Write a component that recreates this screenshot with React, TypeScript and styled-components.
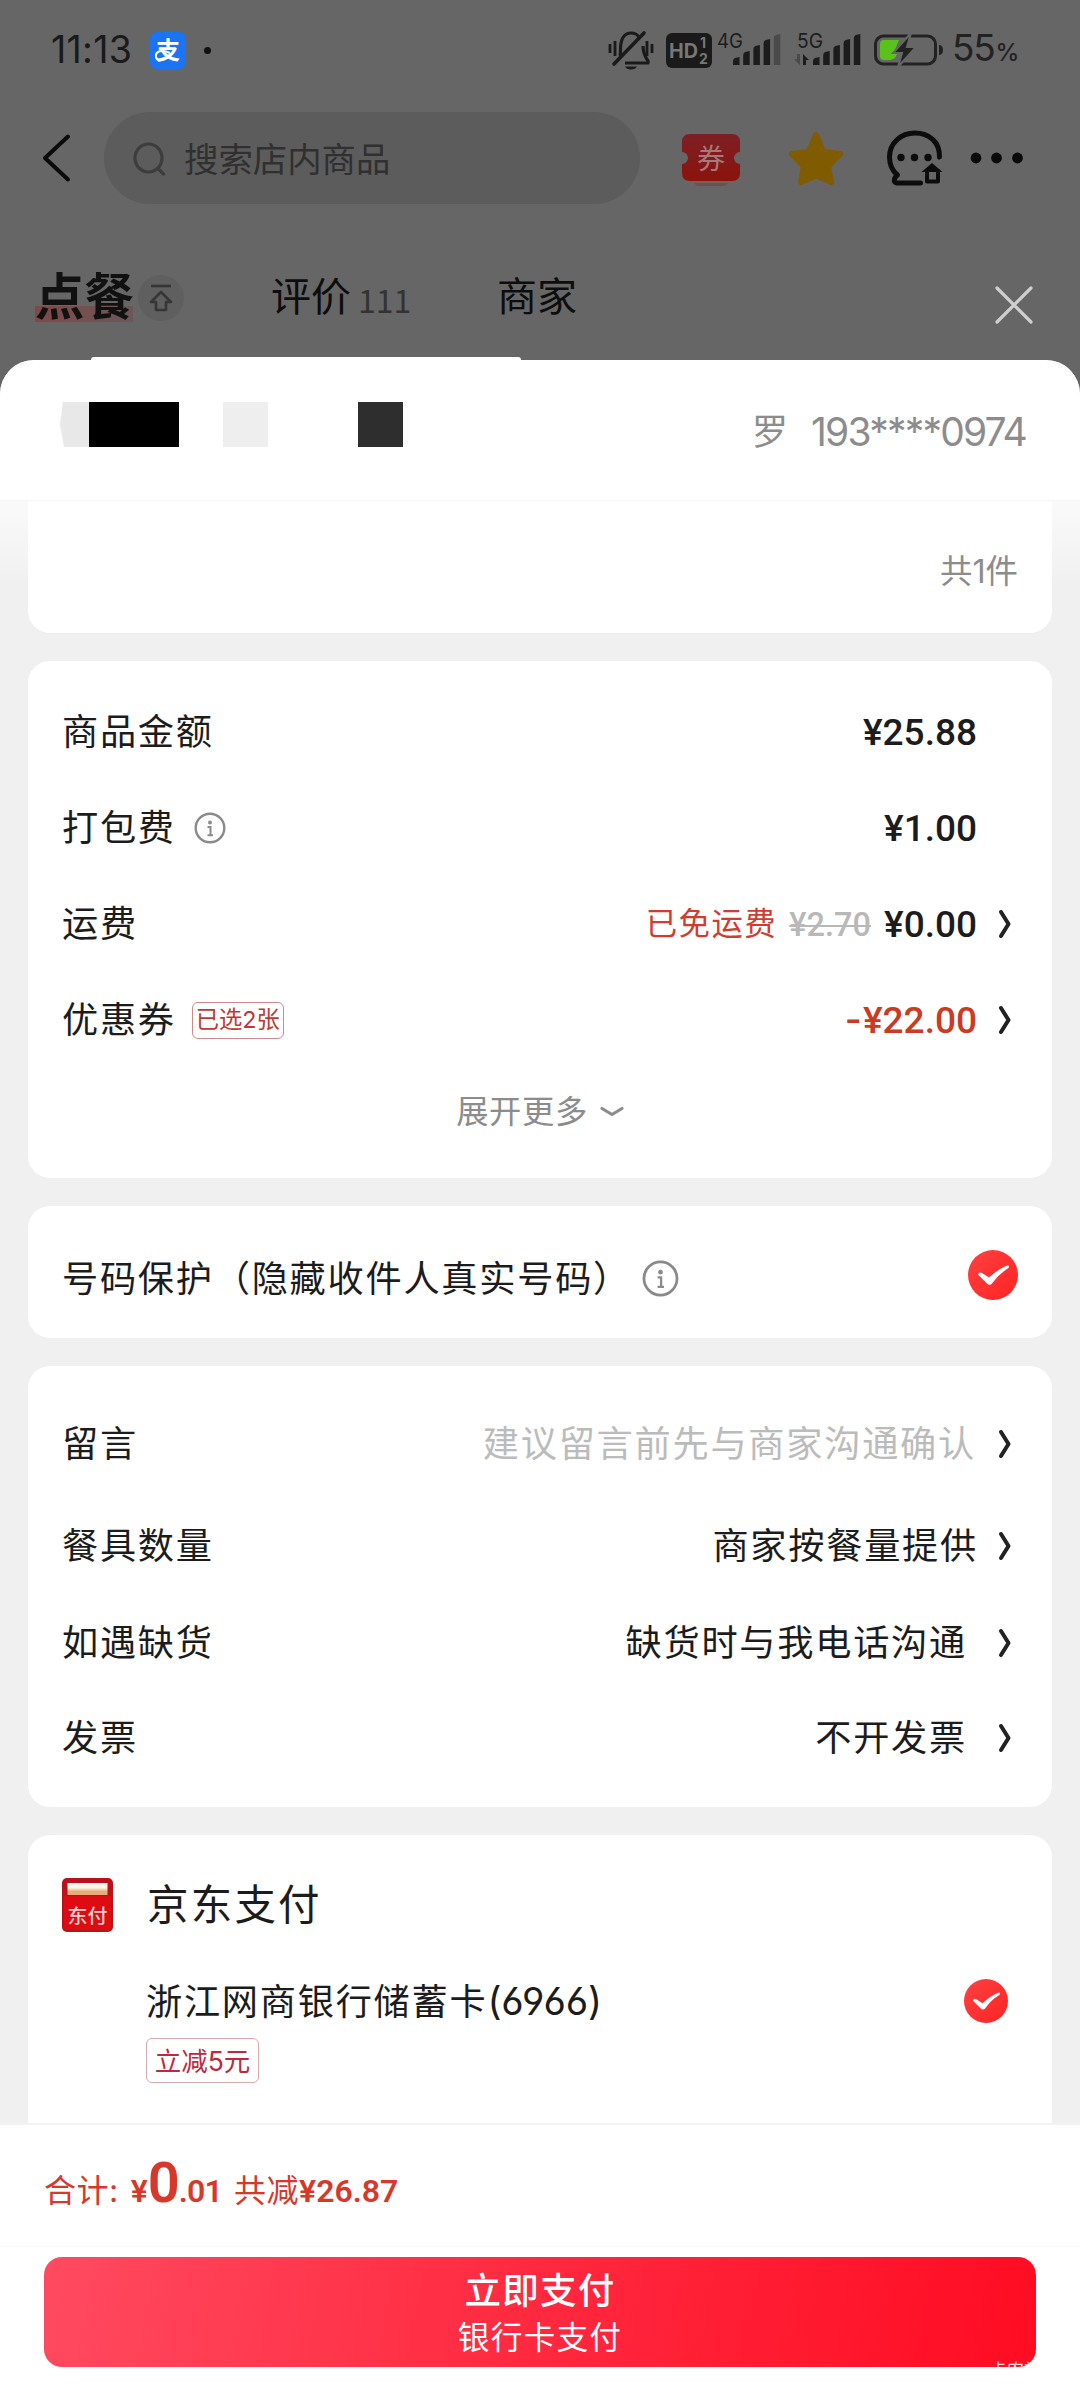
import React from "react";
import styled, { createGlobalStyle } from "styled-components";

const sans = `Inter, "Noto Sans CJK SC", sans-serif`;
const cjk = `"Noto Sans CJK SC", sans-serif`;
const price = `Roboto, "Noto Sans CJK SC", sans-serif`;

const GlobalStyle = createGlobalStyle`
  * { box-sizing: border-box; }
  body { margin: 0; background: #666; font-family: ${sans}; }
  svg { display: block; flex: none; overflow: visible; }
`;

const Page = styled.div`
  width: 1080px;
  height: 2400px;
  display: flex;
  flex-direction: column;
  overflow: hidden;
  background: #666;
  color: #1c1c1c;
`;

/* dimmed shop page behind the sheet */

const StatusBar = styled.div`
  height: 100px;
  padding: 0 65px 0 51px;
  display: flex;
  align-items: center;
  justify-content: space-between;
`;

const StatusGroup = styled.div`
  display: flex;
  align-items: center;
`;

const Clock = styled.span`
  width: 99px;
  font-size: 37.5px;
  line-height: 40px;
  letter-spacing: 0.3px;
  color: #1a1a1a;
`;

const NoticeDot = styled.i`
  width: 7px;
  height: 7px;
  margin-left: 18px;
  border-radius: 50%;
  background: #111;
`;

const Gap = styled.span<{ $w: number }>`
  width: ${(p) => p.$w}px;
`;

const Level = styled.span`
  width: 63px;
  display: flex;
  align-items: baseline;
  font-size: 37px;
  line-height: 40px;
  letter-spacing: -1.2px;
  color: #222;
`;

const Percent = styled.small`
  margin-left: 1px;
  font-size: 24px;
  font-weight: 500;
  letter-spacing: 0;
`;

const NavBar = styled.div`
  height: 116px;
  padding: 0 54px 0 40px;
  display: flex;
  align-items: center;
`;

const SearchBox = styled.div`
  width: 536px;
  height: 92px;
  margin-left: 32px;
  padding: 3px 0 0 28px;
  display: flex;
  align-items: center;
  gap: 18px;
  border-radius: 46px;
  background: #5c5c5c;
  color: #303030;
  font-size: 34.4px;
  line-height: 40px;
`;

const NavIcons = styled.div`
  margin-left: 42px;
  display: flex;
  align-items: center;
`;

const Tabs = styled.div`
  height: 141px;
  padding: 20px 46px 0 35px;
  display: flex;
  align-items: center;
`;

const ActiveTab = styled.span`
  width: 98px;
  font-size: 49.5px;
  line-height: 50px;
  font-weight: 700;
  color: #111;
  white-space: nowrap;
  background: linear-gradient(90deg, #824848, #6a5858) 0 34px / 98px 17px no-repeat;
`;

const TopBadge = styled.span`
  width: 46px;
  height: 46px;
  margin: 2px 87px 0 5px;
  display: flex;
  align-items: center;
  justify-content: center;
  border-radius: 50%;
  background: #5f5f5f;
`;

const Tab = styled.span`
  font-size: 40px;
  line-height: 44px;
  color: #0d0d0d;
`;

const TabCount = styled.span`
  width: 139px;
  margin-left: 7px;
  padding-top: 4px;
  font-family: ${cjk};
  font-size: 32px;
  line-height: 34px;
  color: #333;
`;

const CloseButton = styled.button`
  margin: 16px 0 0 auto;
  padding: 0;
  border: 0;
  background: none;
`;

const SheetLip = styled.div`
  width: 430px;
  height: 3px;
  margin-left: 91px;
  border-radius: 5px 5px 0 0;
  background: #fff;
  flex: none;
`;

/* checkout sheet */

const Sheet = styled.main`
  height: 2040px;
  display: flex;
  flex-direction: column;
  overflow: hidden;
  border-radius: 34px 34px 0 0;
  background: #f0f0f0;
`;

const Address = styled.header`
  height: 141px;
  padding: 42px 54px 0 60px;
  display: flex;
  justify-content: space-between;
  align-items: flex-start;
  background: #fff;
  border-bottom: 1px solid #f6f6f6;
`;

const Mosaic = styled.div`
  display: flex;
  height: 45px;
`;

const Block = styled.i<{ $w: number; $c: string; $cut?: boolean }>`
  width: ${(p) => p.$w}px;
  background: ${(p) => p.$c};
  clip-path: ${(p) => (p.$cut ? "polygon(10% 0, 100% 0, 100% 100%, 14% 100%, 0 50%)" : "none")};
`;

const Contact = styled.div`
  display: flex;
  gap: 23px;
  padding-top: 9px;
  font-size: 36px;
  line-height: 42px;
  color: #8c8c8c;
`;

const Phone = styled.span`
  font-size: 39px;
  letter-spacing: -1.8px;
`;

const Scroll = styled.div`
  height: 1622px;
  padding: 0 28px;
  display: flex;
  flex-direction: column;
  background: linear-gradient(#fafafa, #f0f0f0 84px);
  overflow: hidden;
`;

const Card = styled.section<{ $h: number; $mt?: number; $flatTop?: boolean }>`
  height: ${(p) => p.$h}px;
  flex: none;
  margin-top: ${(p) => p.$mt ?? 28}px;
  padding: 0 34px;
  border-radius: ${(p) => (p.$flatTop ? "0 0 22px 22px" : "22px")};
  background: #fff;
`;

const Count = styled.div`
  padding-top: 51px;
  text-align: right;
  font-size: 32.4px;
  line-height: 40px;
  color: #8c8c8c;
`;

const Row = styled.div<{ $h: number; $mt?: number }>`
  height: ${(p) => p.$h}px;
  margin-top: ${(p) => p.$mt ?? 0}px;
  display: flex;
  align-items: center;
`;

const Label = styled.span`
  font-size: 36.2px;
  line-height: 44px;
  letter-spacing: 1.75px;
  white-space: nowrap;
`;

const Side = styled.div<{ $pad?: number }>`
  margin-left: auto;
  padding-right: ${(p) => p.$pad ?? 6}px;
  display: flex;
  align-items: center;
`;

const Value = styled(Label)<{ $muted?: boolean; $gap?: number }>`
  color: ${(p) => (p.$muted ? "#bbb" : "#1c1c1c")};
  margin-right: ${(p) => p.$gap ?? 22}px;
`;

const Money = styled.span<{ $red?: boolean; $end?: boolean }>`
  margin-right: ${(p) => (p.$end ? 35 : 21)}px;
  padding-top: 2px;
  font-family: ${price};
  font-size: 37px;
  line-height: 44px;
  font-weight: 500;
  color: ${(p) => (p.$red ? "#cc3a22" : "#1c1c1c")};
`;

const Minus = styled.span`
  display: inline-block;
  margin-right: 3px;
  transform: scaleX(1.25);
`;

const FreeShip = styled.span`
  font-size: 31.4px;
  line-height: 40px;
  letter-spacing: 1.5px;
  color: #d23c30;
`;

const OldPrice = styled.del`
  margin: 0 13px 0 12px;
  padding-top: 2px;
  font-family: ${price};
  font-size: 32.5px;
  line-height: 40px;
  font-weight: 500;
  text-decoration-thickness: 2px;
  color: #b8b8b8;
`;

const Tag = styled.span<{ $large?: boolean }>`
  width: ${(p) => (p.$large ? 113 : 92)}px;
  height: ${(p) => (p.$large ? 45 : 37)}px;
  display: flex;
  align-items: center;
  justify-content: center;
  border: 1px solid ${(p) => (p.$large ? "#dba9b0" : "#d08a88")};
  border-radius: 6px;
  font-size: ${(p) => (p.$large ? 26.5 : 23.3)}px;
  line-height: 32px;
  white-space: nowrap;
  color: ${(p) => (p.$large ? "#c0283c" : "#c0392f")};
`;

const More = styled.div`
  height: 88px;
  display: flex;
  align-items: center;
  justify-content: center;
  gap: 12px;
  font-size: 32.3px;
  line-height: 40px;
  letter-spacing: 0.6px;
  color: #8c8c8c;
`;

const PayName = styled.span`
  margin-left: 34px;
  font-size: 41.5px;
  line-height: 50px;
  letter-spacing: 2.2px;
`;

const PayBody = styled.div`
  padding-left: 84px;
`;

const Digits = styled.span`
  font-size: 38.5px;
  letter-spacing: -0.2px;
  font-feature-settings: "cv03", "cv04";
`;

const Summary = styled.div`
  height: 124px;
  flex: none;
  padding: 28px 0 0 44px;
  display: flex;
  align-items: baseline;
  background: #fff;
  border-top: 2px solid #f3f3f3;
  border-bottom: 1px solid #f8f8f8;
  color: #d8382a;
`;

const SumText = styled.span<{ $ml?: number }>`
  margin-left: ${(p) => p.$ml ?? 0}px;
  font-size: 32px;
  line-height: 60px;
  letter-spacing: 0.5px;
`;

const SumMoney = styled.span<{ $size: number; $ml?: number; $ls?: number }>`
  margin-left: ${(p) => p.$ml ?? 0}px;
  font-family: ${price};
  font-size: ${(p) => p.$size}px;
  line-height: 60px;
  font-weight: 600;
  letter-spacing: ${(p) => p.$ls ?? 0}px;
`;

const Footer = styled.footer`
  flex: 1;
  padding: 10px 44px 0;
  background: #fff;
`;

const PayButton = styled.button`
  position: relative;
  width: 992px;
  height: 110px;
  padding: 0;
  display: flex;
  flex-direction: column;
  align-items: center;
  overflow: hidden;
  border: 0;
  border-radius: 18px;
  background: linear-gradient(100deg, #ff4a60, #ff2a40 48%, #ff0c22);
  color: #fff;
  font-family: ${sans};
`;

const PayTitle = styled.span`
  margin-top: 10px;
  font-size: 36.5px;
  line-height: 48px;
  font-weight: 500;
  letter-spacing: 1.2px;
`;

const PaySub = styled.span`
  font-size: 31.7px;
  line-height: 46px;
  letter-spacing: 1.2px;
`;

const Watermark = styled.span`
  position: absolute;
  right: -5px;
  bottom: -13px;
  font-size: 17px;
  line-height: 20px;
  color: #ffd5d8;
`;

const AlipayIcon = () => (
  <svg width="36" height="37" viewBox="0 0 36 37">
    <rect width="36" height="37" rx="7" fill="#1a74f4" />
    <text x="18" y="27" textAnchor="middle" fontFamily="Noto Sans CJK SC" fontWeight="700" fontSize="24" fill="#fff">支</text>
    <path d="M20 21c-8-4-15-2-14 4 1 5 10 4 15-3" fill="none" stroke="#fff" strokeWidth="2" />
  </svg>
);

const MuteIcon = () => (
  <svg width="46" height="40" viewBox="0 0 46 40" fill="none" stroke="#1a1a1a" strokeWidth="3.2">
    <path d="M2 14v9M7 11v15M39 11v15M44 14v9" strokeWidth="2.8" />
    <path d="M12 26c1-3 0-8 1-13 1-6 5-10 10-10 4 0 6 1 8 4M35 16c0 6 1 9 5 15v2H17" strokeLinejoin="round" />
    <path d="M36 3L6 34" strokeWidth="3.6" strokeLinecap="round" />
    <path d="M17 36.500h12c-1 2-3 3-6 3s-5-1-6-3z" fill="#1a1a1a" stroke="none" />
  </svg>
);

const HdIcon = () => (
  <svg width="46" height="35" viewBox="0 0 46 35" fontFamily="Inter" fontWeight="700">
    <rect width="46" height="35" rx="6" fill="#1a1a1a" />
    <g fill="#777">
      <text x="3" y="25" fontSize="20" textLength="29" lengthAdjust="spacingAndGlyphs">HD</text>
      <text x="34" y="15" fontSize="14">1</text>
      <text x="33" y="31" fontSize="14">2</text>
    </g>
  </svg>
);

const Bars = ({ x, dim }: { x: number; dim?: boolean }) => (
  <g>
    {[8, 14, 20, 26, 31].map((h, i) => (
      <path
        key={h}
        d={`M${x + i * 10.2} 32v${-h + 4}q0-2 2-3l4.500-1v${h}z`}
        fill={dim && i === 4 ? "#4a4a4a" : "#1c1c1c"}
      />
    ))}
  </g>
);

const Signal4G = () => (
  <svg width="65" height="34" viewBox="0 0 65 34">
    <text x="0" y="14.500" fontFamily="Inter" fontSize="20" fill="#1c1c1c" textLength="26" lengthAdjust="spacingAndGlyphs">4G</text>
    <Bars x={16} dim />
  </svg>
);

const Signal5G = () => (
  <svg width="67" height="34" viewBox="0 0 67 34">
    <text x="3" y="14.500" fontFamily="Inter" fontSize="20" fill="#1c1c1c" textLength="26" lengthAdjust="spacingAndGlyphs">5G</text>
    <path d="M6 21v11L0 26h3v-5z" fill="#4a4a4a" />
    <path d="M9 32V21l6 6h-3v5z" fill="#1c1c1c" />
    <Bars x={19} />
  </svg>
);

const BatteryIcon = () => (
  <svg width="69" height="32" viewBox="0 0 69 32">
    <rect x="1.500" y="2" width="60" height="28" rx="8" fill="none" stroke="#222" strokeWidth="3" />
    <path d="M10 6h15l-5 12h4l-3 6a10 10 0 0 1-5 2h-6q-4 0-4-4V10q0-4 4-4z" fill="#5bc21c" />
    <path d="M37 -1L19 19h9l-4 14 18-20h-9l4-14z" fill="#222" stroke="#666" strokeWidth="2" />
    <path d="M65 11h1q3 1 3 5t-3 5h-1z" fill="#222" />
  </svg>
);

const BackIcon = () => (
  <svg width="32" height="52" viewBox="0 0 32 52">
    <path d="M28 4.500L5 26l23 21.500" fill="none" stroke="#0a0a0a" strokeWidth="4" strokeLinecap="round" strokeLinejoin="round" />
  </svg>
);

const SearchIcon = () => (
  <svg width="34" height="36" viewBox="0 1 34 36" fill="none" stroke="#3d3d3d" strokeWidth="3.200">
    <ellipse cx="16.500" cy="17" rx="13.500" ry="14" />
    <path d="M26 27.500l5.500 5.500" strokeLinecap="round" />
  </svg>
);

const CouponIcon = () => (
  <svg width="58" height="56" viewBox="0 -4 58 56">
    <defs>
      <linearGradient id="coupon" x1="0" y1="0" x2="0" y2="1">
        <stop offset="0" stopColor="#7d1f26" />
        <stop offset="1" stopColor="#8b130c" />
      </linearGradient>
    </defs>
    <path d="M12 49h34l-3 3H15z" fill="#704f52" />
    <path d="M8 0h42q8 0 8 8v10a6 6 0 0 0 0 12v9q0 8-8 8H8q-8 0-8-8v-9a6 6 0 0 0 0-12V8q0-8 8-8z" fill="url(#coupon)" />
    <text x="29" y="34.500" textAnchor="middle" fontFamily="Noto Sans CJK SC" fontSize="28" fill="#a8797a">券</text>
  </svg>
);

const StarIcon = () => (
  <svg width="56" height="56" viewBox="0 0 56 56">
    <path
      d="M28 5l6.500 15.500Q35 22 37 22.300L52 24 41 35.500q-1 1-.8 2.500L43 52 29.500 46q-1.500-.7-3 0L13 52l2.800-14q.2-1.500-.8-2.500L4 24l15-1.700q2-.3 2.500-1.800z"
      fill="#805b00"
      stroke="#805b00"
      strokeWidth="6"
      strokeLinejoin="round"
    />
  </svg>
);

const ServiceIcon = () => (
  <svg width="56" height="56" viewBox="0 0 56 56" fill="none" stroke="#0c0c0c" strokeWidth="5" strokeLinecap="round">
    <path d="M52.500 27C53 12 42 3 28 3S2.500 13 2.500 27c0 8 3 14 8 18-4 3-4 7-1 8h24" strokeLinejoin="round" />
    <path d="M34.500 42L45 33l10.500 9z" fill="#0c0c0c" stroke="none" />
    <path d="M40 41v10.500h11V41" strokeWidth="4" strokeLinejoin="round" />
    <g fill="#0c0c0c" stroke="none">
      <circle cx="14" cy="27.500" r="3.700" />
      <circle cx="27.500" cy="27.500" r="3.700" />
      <circle cx="41" cy="27.500" r="3.700" />
    </g>
  </svg>
);

const DotsIcon = () => (
  <svg width="54" height="12" viewBox="0 0 54 12" fill="#0a0a0a">
    <circle cx="6" cy="6" r="5.400" />
    <circle cx="26.500" cy="6" r="5.400" />
    <circle cx="47.500" cy="6" r="5.400" />
  </svg>
);

const ToTopIcon = () => (
  <svg width="24" height="28" viewBox="0 0 24 28" fill="none" stroke="#363636" strokeWidth="2.600" strokeLinejoin="round">
    <path d="M2 2h20" />
    <path d="M12 8L2 18h5v8h10v-8h5z" />
  </svg>
);

const CloseIcon = () => (
  <svg width="40" height="40" viewBox="0 0 40 40">
    <path d="M3 3l34 34M37 3L3 37" stroke="#cfcfcf" strokeWidth="3.200" strokeLinecap="round" />
  </svg>
);

const Chevron = () => (
  <svg width="14" height="30" viewBox="0 0 14 30">
    <path d="M3 3l7.500 12L3 27" fill="none" stroke="#222" strokeWidth="4" strokeLinecap="round" strokeLinejoin="round" />
  </svg>
);

const InfoIcon = ({ size }: { size: number }) => (
  <svg width={size} height={size} viewBox="0 0 32 32">
    <circle cx="16" cy="16" r="14.300" fill="none" stroke="#8a8a8a" strokeWidth="2.400" />
    <circle cx="16" cy="10.500" r="2" fill="#8a8a8a" />
    <path d="M13.500 15h3v8M13.500 23.300h5.500" fill="none" stroke="#8a8a8a" strokeWidth="2" />
  </svg>
);

const MoreArrow = () => (
  <svg width="24" height="12" viewBox="0 0 24 12">
    <path d="M2 2.500l10 6 10-6" fill="none" stroke="#8c8c8c" strokeWidth="3.200" strokeLinejoin="round" strokeLinecap="round" />
  </svg>
);

const CheckIcon = ({ size }: { size: number }) => (
  <svg width={size} height={size} viewBox="0 0 50 50">
    <defs>
      <linearGradient id="check" x1="0" y1="0" x2="1" y2="1">
        <stop offset="0" stopColor="#ff4040" />
        <stop offset="1" stopColor="#ff2424" />
      </linearGradient>
    </defs>
    <circle cx="25" cy="25" r="25" fill="url(#check)" />
    <path d="M10 24.500q1-3 4-1.500l7 4.500Q30 19 39 15.500q3-.5 1.500 2.500-10 6-16.500 15.500-2.500 2.500-5 0z" fill="#fff" />
  </svg>
);

const JdPayIcon = () => (
  <svg width="51" height="54" viewBox="0 0 51 54">
    <defs>
      <linearGradient id="strip" x1="0" y1="0" x2="0" y2="1">
        <stop offset="0.400" stopColor="#fff6ea" />
        <stop offset="0.700" stopColor="#e5ae78" />
      </linearGradient>
    </defs>
    <rect width="51" height="54" rx="5" fill="#b8131a" />
    <path d="M2 18h47v32q0 2-3 2H5q-3 0-3-2z" fill="#dc0d12" />
    <rect x="5.500" y="5" width="40" height="12" fill="url(#strip)" />
    <text x="25.500" y="45" textAnchor="middle" fontFamily="Noto Sans CJK SC" fontWeight="500" fontSize="19" textLength="40" lengthAdjust="spacingAndGlyphs" fill="#ffd0cf">东付</text>
  </svg>
);

const options = [
  { label: "留言", value: "建议留言前先与商家沟通确认", muted: true, h: 100, gap: 22 },
  { label: "餐具数量", value: "商家按餐量提供", h: 104, gap: 20 },
  { label: "如遇缺货", value: "缺货时与我电话沟通", h: 90, gap: 31 },
  { label: "发票", value: "不开发票", h: 99, gap: 31 },
];

export default function App() {
  return (
    <Page>
      <GlobalStyle />
      <StatusBar>
        <StatusGroup>
          <Clock>11:13</Clock>
          <AlipayIcon />
          <NoticeDot />
        </StatusGroup>
        <StatusGroup>
          <MuteIcon />
          <Gap $w={12} />
          <HdIcon />
          <Gap $w={5} />
          <Signal4G />
          <Gap $w={12} />
          <Signal5G />
          <Gap $w={13} />
          <BatteryIcon />
          <Gap $w={9} />
          <Level>
            55<Percent>%</Percent>
          </Level>
        </StatusGroup>
      </StatusBar>

      <NavBar>
        <BackIcon />
        <SearchBox>
          <SearchIcon />
          搜索店内商品
        </SearchBox>
        <NavIcons>
          <CouponIcon />
          <Gap $w={48} />
          <StarIcon />
          <Gap $w={43} />
          <ServiceIcon />
          <Gap $w={27} />
          <DotsIcon />
        </NavIcons>
      </NavBar>

      <Tabs>
        <ActiveTab>点餐</ActiveTab>
        <TopBadge>
          <ToTopIcon />
        </TopBadge>
        <Tab>评价</Tab>
        <TabCount>111</TabCount>
        <Tab>商家</Tab>
        <CloseButton aria-label="关闭">
          <CloseIcon />
        </CloseButton>
      </Tabs>
      <SheetLip />

      <Sheet>
        <Address>
          <Mosaic>
            <Block $w={29} $c="#e8e8e8" $cut />
            <Block $w={90} $c="#000" />
            <Block $w={44} $c="#fff" />
            <Block $w={45} $c="#eee" />
            <Block $w={90} $c="#fff" />
            <Block $w={45} $c="#2e2e2e" />
          </Mosaic>
          <Contact>
            <span>罗</span>
            <Phone>193****0974</Phone>
          </Contact>
        </Address>

        <Scroll>
          <Card $h={132} $mt={0} $flatTop>
            <Count>共1件</Count>
          </Card>

          <Card $h={517}>
            <Row $h={96} $mt={23}>
              <Label>商品金额</Label>
              <Side>
                <Money $end>¥25.88</Money>
              </Side>
            </Row>
            <Row $h={96}>
              <Label>打包费</Label>
              <Gap $w={18} />
              <InfoIcon size={32} />
              <Side>
                <Money $end>¥1.00</Money>
              </Side>
            </Row>
            <Row $h={96}>
              <Label>运费</Label>
              <Side>
                <FreeShip>已免运费</FreeShip>
                <OldPrice>¥2.70</OldPrice>
                <Money>¥0.00</Money>
                <Chevron />
              </Side>
            </Row>
            <Row $h={96}>
              <Label>优惠券</Label>
              <Gap $w={16} />
              <Tag>已选2张</Tag>
              <Side>
                <Money $red>
                  <Minus>-</Minus>¥22.00
                </Money>
                <Chevron />
              </Side>
            </Row>
            <More>
              展开更多
              <MoreArrow />
            </More>
          </Card>

          <Card $h={132}>
            <Row $h={138}>
              <Row $h={132} $mt={7}>
                <Label>号码保护（隐藏收件人真实号码）</Label>
                <Gap $w={11} />
                <InfoIcon size={37} />
              </Row>
              <Side $pad={-1}>
                <CheckIcon size={50} />
              </Side>
            </Row>
          </Card>

          <Card $h={441}>
            <Row $h={28} />
            {options.map((o) => (
              <Row key={o.label} $h={o.h}>
                <Label>{o.label}</Label>
                <Side>
                  <Value $muted={o.muted} $gap={o.gap}>
                    {o.value}
                  </Value>
                  <Chevron />
                </Side>
              </Row>
            ))}
          </Card>

          <Card $h={330}>
            <Row $h={54} $mt={43}>
              <JdPayIcon />
              <PayName>京东支付</PayName>
            </Row>
            <PayBody>
              <Row $h={60} $mt={39}>
                <Label>
                  浙江网商银行储蓄卡<Digits>(6966)</Digits>
                </Label>
                <Side $pad={10}>
                  <CheckIcon size={44} />
                </Side>
              </Row>
              <Row $h={45} $mt={7}>
                <Tag $large>立减5元</Tag>
              </Row>
            </PayBody>
          </Card>
        </Scroll>

        <Summary>
          <SumText>合计:</SumText>
          <SumMoney $size={32} $ml={12}>¥</SumMoney>
          <SumMoney $size={56} $ls={-1}>0</SumMoney>
          <SumMoney $size={32} $ls={-0.8}>.01</SumMoney>
          <SumText $ml={12}>共减</SumText>
          <SumMoney $size={32}>¥26.87</SumMoney>
        </Summary>
        <Footer>
          <PayButton>
            <PayTitle>立即支付</PayTitle>
            <PaySub>银行卡支付</PaySub>
            <Watermark>卡农社</Watermark>
          </PayButton>
        </Footer>
      </Sheet>
    </Page>
  );
}
